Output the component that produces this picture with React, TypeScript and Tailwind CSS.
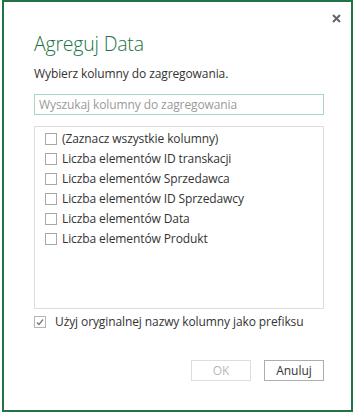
import React, { useState } from 'react';

const columns = [
  '(Zaznacz wszystkie kolumny)',
  'Liczba elementów ID transkacji',
  'Liczba elementów Sprzedawca',
  'Liczba elementów ID Sprzedawcy',
  'Liczba elementów Data',
  'Liczba elementów Produkt',
];

export default function App() {
  const [checked, setChecked] = useState<boolean[]>(columns.map(() => false));
  const [usePrefix, setUsePrefix] = useState(true);

  return (
    <div className="w-[355px] h-[414px] bg-white font-['Open_Sans',sans-serif] text-[#333] pl-[2px] pr-[2px] pb-[2px]">
      <div className="h-[412px] border-2 border-[#217346] relative">
        {/* Close */}
        <button className="absolute top-[10px] right-[9px] w-[12px] h-[12px] flex items-center justify-center">
          <svg width="9" height="9" viewBox="0 0 9 9">
            <path d="M1 1L8 8M8 1L1 8" stroke="#666" strokeWidth="2" />
          </svg>
        </button>

        <div className="pl-[30px] pr-[27px] pt-[28px]">
          <h1 className="text-[19.5px] font-light text-[#217346] leading-[28px] tracking-[-0.2px]">Agreguj Data</h1>
          <p className="text-[12px] leading-[18px] mt-[7px] tracking-[-0.1px]">Wybierz kolumny do zagregowania.</p>

          <input
            placeholder="Wyszukaj kolumny do zagregowania"
            className="mt-[11px] w-full h-[21px] border border-[#a6d8bc] px-[4px] text-[12px] tracking-[-0.1px] outline-none placeholder:text-[#9a9a9a]"
          />

          <div className="mt-[11px] h-[183px] border border-[#dcdcdc] pt-[2px]">
            {columns.map((c, i) => (
              <label key={c} className="flex items-center h-[20px] pl-[10px] gap-[5px] text-[12px] tracking-[-0.1px] cursor-pointer">
                <span
                  onClick={() => setChecked(checked.map((v, j) => (j === i ? !v : v)))}
                  className="w-[12px] h-[12px] border border-[#a8a8a8] bg-white shrink-0"
                />
                <span>{c}</span>
              </label>
            ))}
          </div>

          <label className="flex items-center gap-[9px] mt-[5px] h-[16px] text-[12px] tracking-[-0.1px]" onClick={() => setUsePrefix(!usePrefix)}>
            <span className="w-[12px] h-[12px] border border-[#b5b5b5] bg-white shrink-0 flex items-center justify-center">
              {usePrefix && (
                <svg width="8" height="8" viewBox="0 0 8 8">
                  <path d="M1 4.5L3 6.5L7 1.5" stroke="#777" strokeWidth="1.3" fill="none" />
                </svg>
              )}
            </span>
            <span>Użyj oryginalnej nazwy kolumny jako prefiksu</span>
          </label>

          <div className="flex justify-end gap-[13px] mt-[30px]">
            <button className="w-[60px] h-[21px] border border-[#dedede] text-[12px] text-[#b8b8b8]">OK</button>
            <button className="w-[60px] h-[21px] border border-[#adadad] text-[12px] text-[#333]">Anuluj</button>
          </div>
        </div>
      </div>
    </div>
  );
}
